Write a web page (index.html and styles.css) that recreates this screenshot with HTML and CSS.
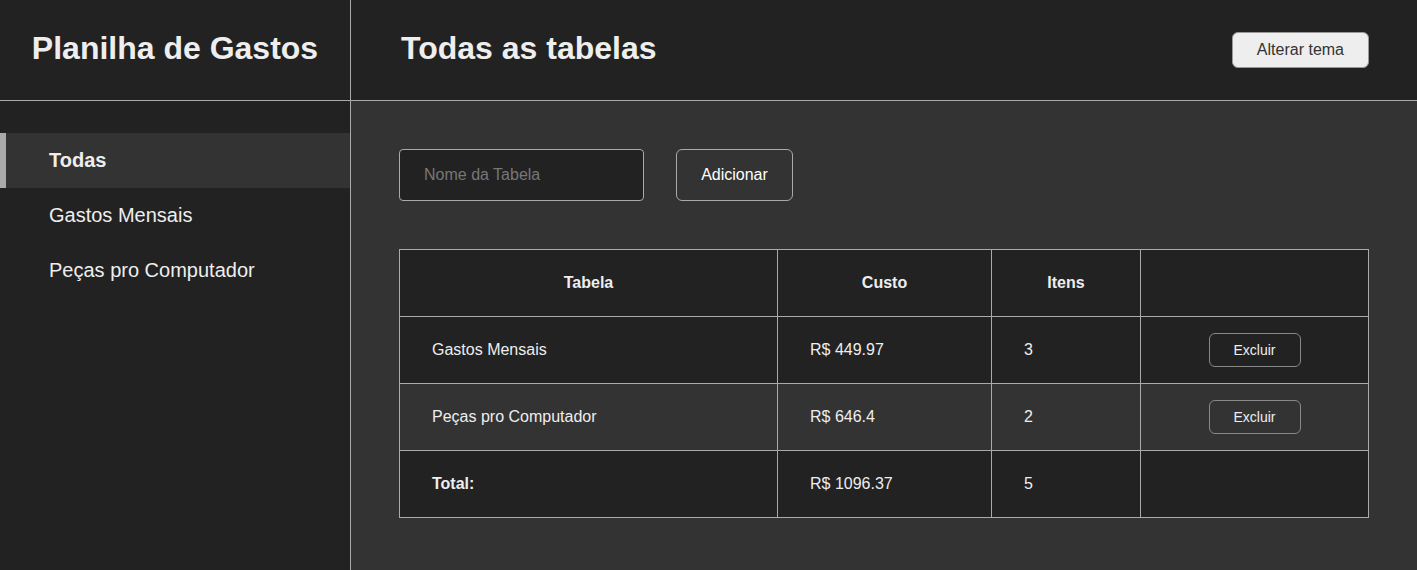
FILE: index.html
```html
<!DOCTYPE html>
<html lang="pt-BR">
<head>
<meta charset="utf-8">
<title>Planilha de Gastos</title>
<link rel="stylesheet" href="styles.css">
</head>
<body>
<div class="app">
  <aside class="sidebar">
    <header class="side-head"><h1 class="brand">Planilha de Gastos</h1></header>
    <nav class="nav">
      <a class="nav-item active">Todas</a>
      <a class="nav-item">Gastos Mensais</a>
      <a class="nav-item">Peças pro Computador</a>
    </nav>
  </aside>
  <main class="main">
    <header class="main-head">
      <h2 class="page-title">Todas as tabelas</h2>
      <button class="theme-btn">Alterar tema</button>
    </header>
    <section class="content">
      <form class="add-form">
        <input class="name-input" type="text" placeholder="Nome da Tabela">
        <button type="button" class="add-btn">Adicionar</button>
      </form>
      <table class="tbl">
        <colgroup>
          <col class="c-name"><col class="c-cost"><col class="c-items"><col class="c-act">
        </colgroup>
        <thead>
          <tr><th>Tabela</th><th>Custo</th><th>Itens</th><th></th></tr>
        </thead>
        <tbody>
          <tr><td>Gastos Mensais</td><td>R$ 449.97</td><td>3</td><td class="act"><button class="del-btn">Excluir</button></td></tr>
          <tr class="alt"><td>Peças pro Computador</td><td>R$ 646.4</td><td>2</td><td class="act"><button class="del-btn">Excluir</button></td></tr>
          <tr><td class="total">Total:</td><td>R$ 1096.37</td><td>5</td><td></td></tr>
        </tbody>
      </table>
    </section>
  </main>
</div>
</body>
</html>
```
FILE: styles.css
```css
* { box-sizing: border-box; }
html, body { margin: 0; padding: 0; }
body {
  font-family: "Liberation Sans", Arial, sans-serif;
  background: #333;
  color: #eee;
  height: 570px;
  overflow: hidden;
}
.app {
  display: grid;
  grid-template-columns: 351px 1fr;
  height: 570px;
}
.sidebar {
  background: #222;
  border-right: 1px solid #aaa;
}
.side-head, .main-head {
  height: 101px;
  border-bottom: 1px solid #aaa;
  display: flex;
  align-items: center;
  background: #222;
}
.side-head { justify-content: center; }
.brand, .page-title {
  margin: 0;
  font-size: 32px;
  font-weight: bold;
  color: #eee;
  padding-bottom: 4px;
}
.nav {
  padding-top: 32px;
  display: flex;
  flex-direction: column;
}
.nav-item {
  height: 55px;
  display: flex;
  align-items: center;
  font-size: 20px;
  color: #eee;
  border-left: 6px solid transparent;
  padding-left: 43px;
}
.nav-item.active {
  background: #333;
  border-left-color: #aaa;
  font-weight: bold;
}
.main-head {
  justify-content: space-between;
  padding: 0 48px 0 50px;
}
.theme-btn {
  font-family: inherit;
  font-size: 16px;
  color: #333;
  background: #eee;
  border: 1px solid #999;
  border-radius: 6px;
  padding: 8px 24px;
  line-height: 18px;
  white-space: nowrap;
  margin-top: -1px;
}
.content {
  padding: 48px;
}
.add-form {
  display: flex;
  gap: 32px;
  margin: 0 0 48px;
}
.name-input {
  width: 245px;
  height: 52px;
  background: #222;
  border: 1px solid #aaa;
  border-radius: 4px;
  padding: 0 24px;
  font-family: inherit;
  font-size: 16px;
  color: #eee;
}
.name-input::placeholder { color: #777; }
.add-btn {
  width: 117px;
  height: 52px;
  background: #333;
  border: 1px solid #aaa;
  border-radius: 6px;
  font-family: inherit;
  font-size: 16px;
  color: #fff;
}
.tbl {
  width: 969px;
  border-collapse: collapse;
  table-layout: fixed;
  font-size: 16px;
}
.c-name { width: 378px; }
.c-cost { width: 214px; }
.c-items { width: 149px; }
.c-act { width: 228px; }
.tbl th, .tbl td {
  border: 1px solid #aaa;
  height: 67px;
  padding: 0 32px;
  background: #222;
  color: #eee;
  text-align: left;
  vertical-align: middle;
}
.tbl th { text-align: center; font-weight: bold; }
.tbl tr.alt td { background: #333; }
.tbl td.total { font-weight: bold; }
.tbl td.act { text-align: center; padding: 0; }
.del-btn {
  width: 92px;
  height: 34px;
  background: transparent;
  border: 1px solid #888;
  border-radius: 6px;
  font-family: inherit;
  font-size: 14px;
  color: #eee;
}
```
